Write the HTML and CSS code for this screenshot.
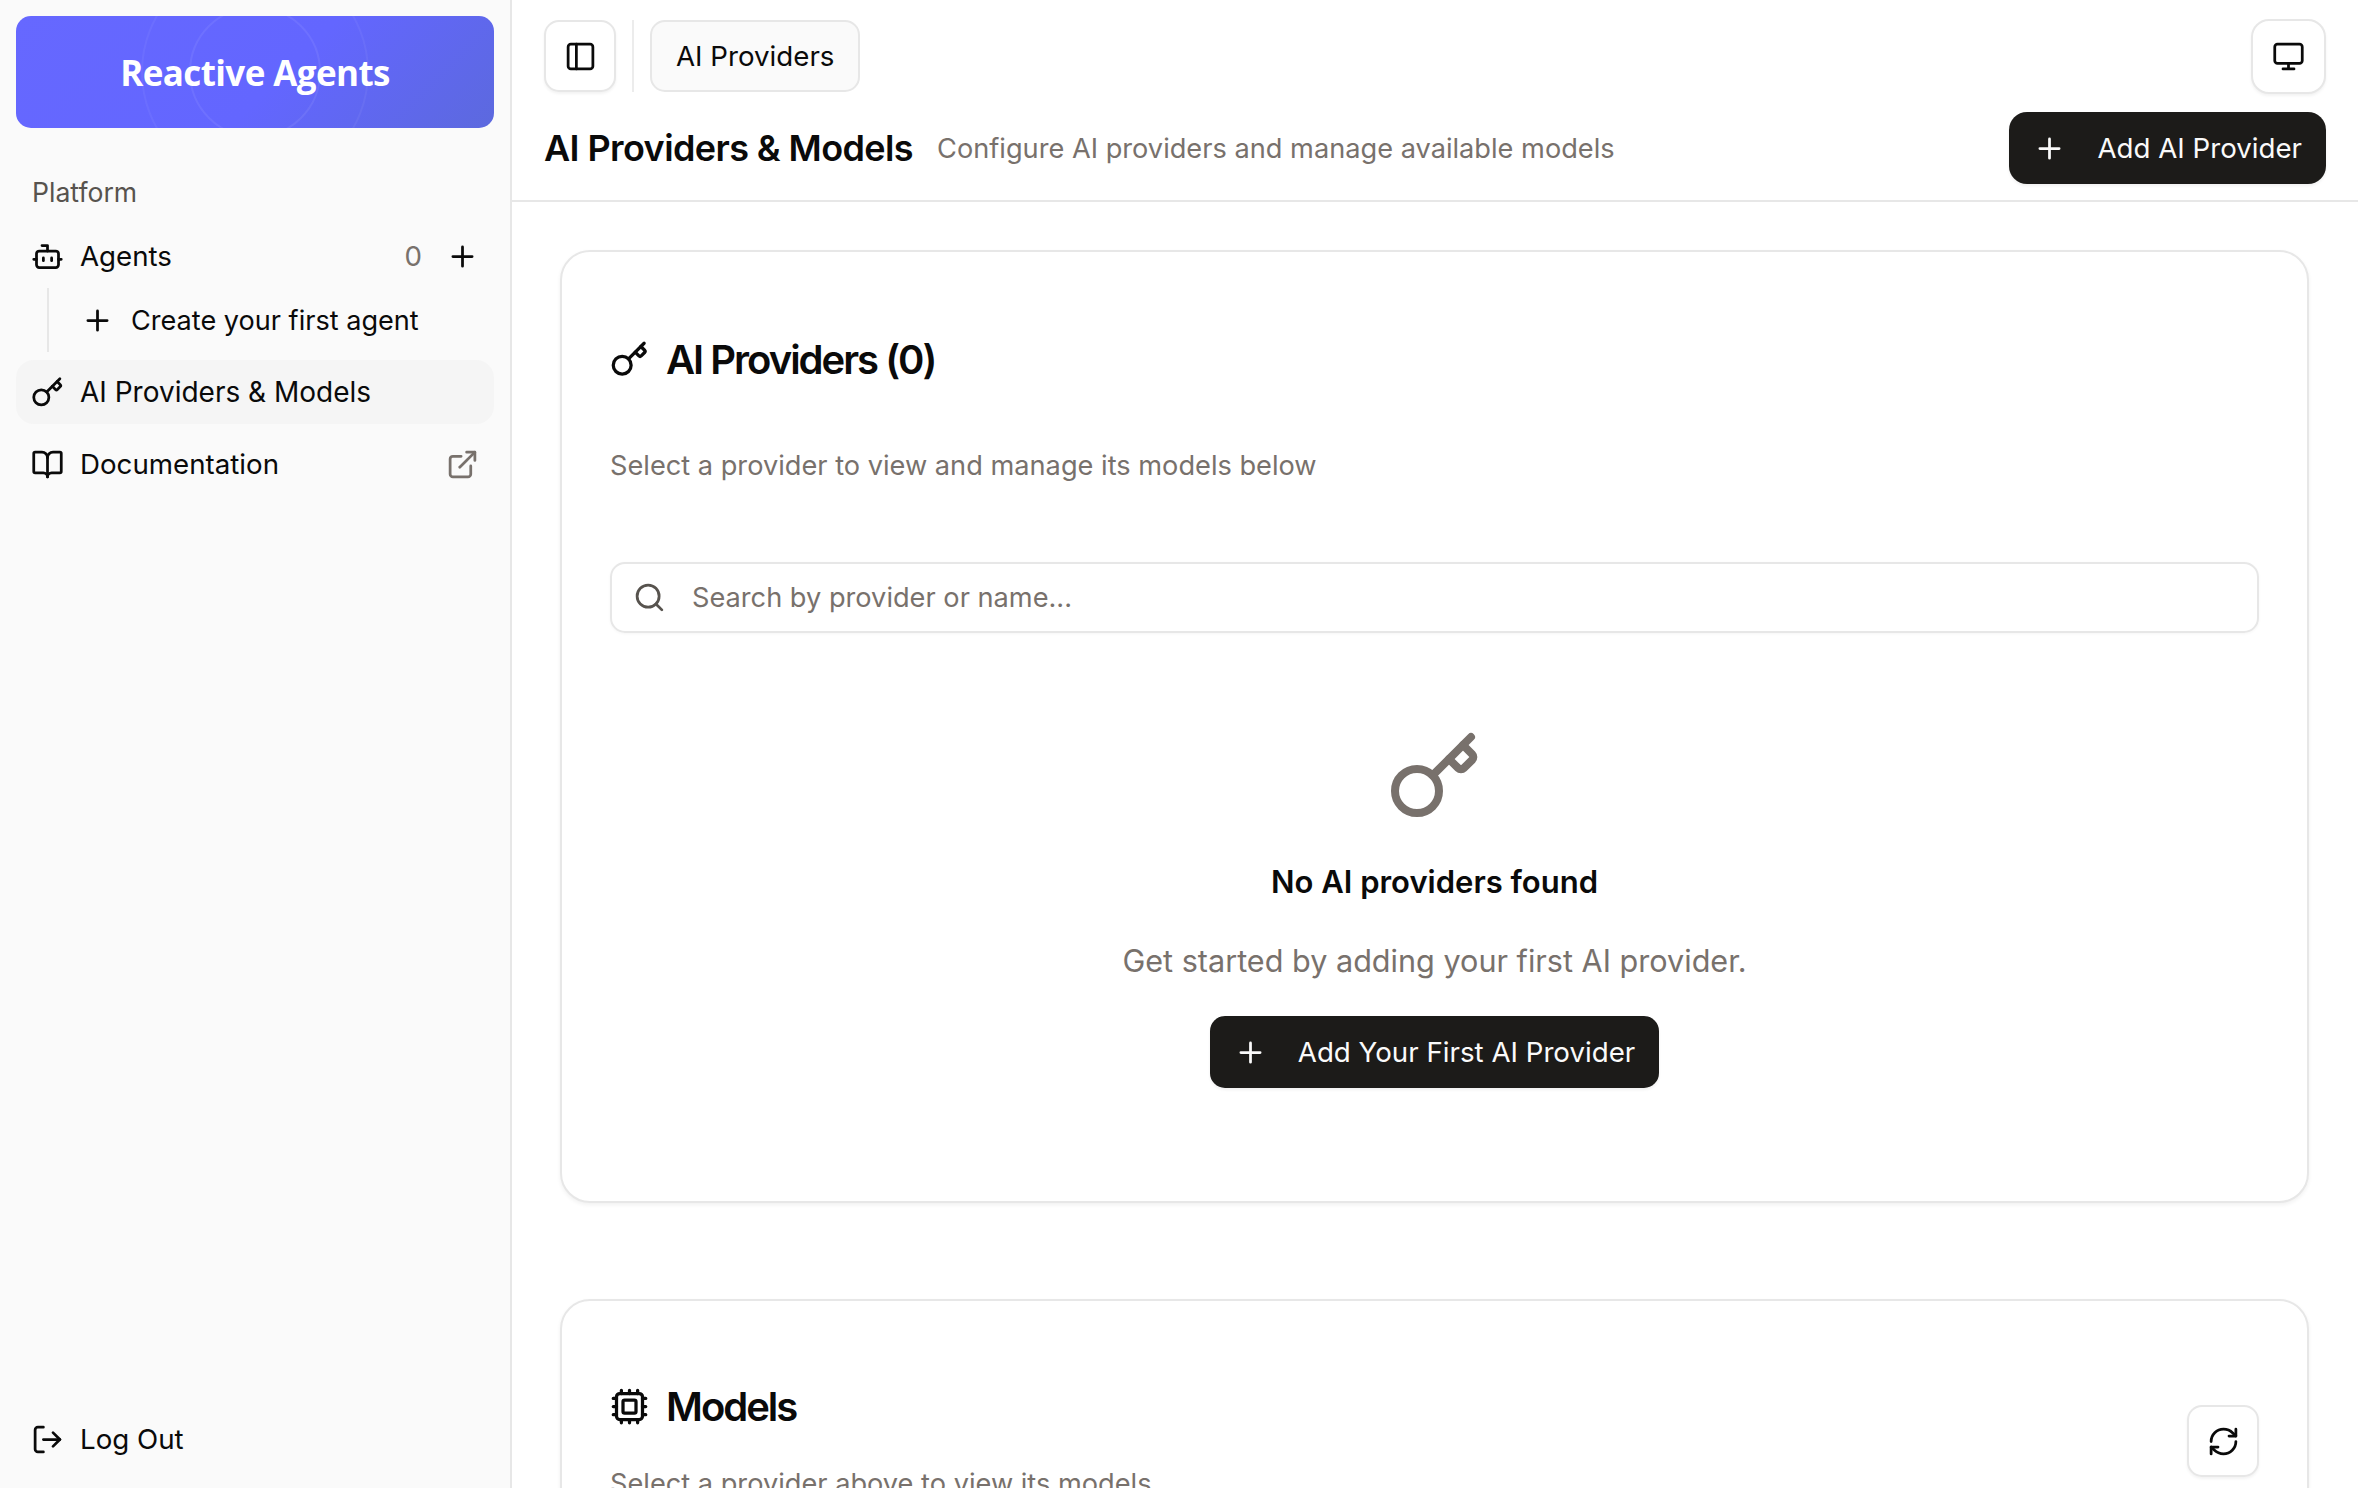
FILE: index.html
```html
<!DOCTYPE html>
<html lang="en">
<head>
<meta charset="utf-8">
<title>AI Providers &amp; Models</title>
<link rel="stylesheet" href="styles.css">
</head>
<body>
<svg class="defs" width="0" height="0" aria-hidden="true">
  <symbol id="i-bot" viewBox="0 0 24 24"><path d="M12 8V4H8"/><rect width="16" height="12" x="4" y="8" rx="2"/><path d="M2 14h2M20 14h2M15 13v2M9 13v2"/></symbol>
  <symbol id="i-key" viewBox="0 0 24 24"><path d="m15.5 7.5 2.3 2.3a1 1 0 0 0 1.4 0l2.1-2.1a1 1 0 0 0 0-1.4L19 4"/><path d="m21 2-9.6 9.6"/><circle cx="7.5" cy="15.5" r="5.5"/></symbol>
  <symbol id="i-book" viewBox="0 0 24 24"><path d="M12 7v14"/><path d="M3 18a1 1 0 0 1-1-1V4a1 1 0 0 1 1-1h5a4 4 0 0 1 4 4 4 4 0 0 1 4-4h5a1 1 0 0 1 1 1v13a1 1 0 0 1-1 1h-6a3 3 0 0 0-3 3 3 3 0 0 0-3-3z"/></symbol>
  <symbol id="i-ext" viewBox="0 0 24 24"><path d="M15 3h6v6"/><path d="M10 14 21 3"/><path d="M18 13v6a2 2 0 0 1-2 2H5a2 2 0 0 1-2-2V8a2 2 0 0 1 2-2h6"/></symbol>
  <symbol id="i-logout" viewBox="0 0 24 24"><path d="m16 17 5-5-5-5"/><path d="M21 12H9"/><path d="M9 21H5a2 2 0 0 1-2-2V5a2 2 0 0 1 2-2h4"/></symbol>
  <symbol id="i-panel" viewBox="0 0 24 24"><rect width="18" height="18" x="3" y="3" rx="2"/><path d="M9 3v18"/></symbol>
  <symbol id="i-monitor" viewBox="0 0 24 24"><rect width="20" height="14" x="2" y="3" rx="2"/><path d="M8 21h8M12 17v4"/></symbol>
  <symbol id="i-plus" viewBox="0 0 24 24"><path d="M5 12h14M12 5v14"/></symbol>
  <symbol id="i-search" viewBox="0 0 24 24"><path d="m21 21-4.34-4.34"/><circle cx="11" cy="11" r="8"/></symbol>
  <symbol id="i-cpu" viewBox="0 0 24 24"><path d="M12 20v2M12 2v2M17 20v2M17 2v2M2 12h2M2 17h2M2 7h2M20 12h2M20 17h2M20 7h2M7 20v2M7 2v2"/><rect x="4" y="4" width="16" height="16" rx="2"/><rect x="8" y="8" width="8" height="8" rx="1"/></symbol>
  <symbol id="i-refresh" viewBox="0 0 24 24"><path d="M3 12a9 9 0 0 1 9-9 9.75 9.75 0 0 1 6.74 2.74L21 8"/><path d="M21 3v5h-5"/><path d="M21 12a9 9 0 0 1-9 9 9.75 9.75 0 0 1-6.74-2.74L3 16"/><path d="M8 16H3v5"/></symbol>
</svg>

<div class="app">
  <aside class="sidebar">
    <div class="logo">
      <span class="ring ring-inner"></span>
      <span class="ring ring-outer"></span>
      <span class="logo-text">Reactive Agents</span>
    </div>
    <div class="group-label">Platform</div>
    <nav class="nav">
      <div class="nav-row">
        <svg class="icon"><use href="#i-bot"/></svg>
        <span class="nav-text">Agents</span>
        <span class="count">0</span>
        <svg class="icon"><use href="#i-plus"/></svg>
      </div>
      <div class="sub-list">
        <div class="sub-row">
          <svg class="icon"><use href="#i-plus"/></svg>
          <span>Create your first agent</span>
        </div>
      </div>
      <div class="nav-row active">
        <svg class="icon"><use href="#i-key"/></svg>
        <span class="nav-text">AI Providers &amp; Models</span>
      </div>
      <div class="nav-row">
        <svg class="icon"><use href="#i-book"/></svg>
        <span class="nav-text">Documentation</span>
        <svg class="icon muted"><use href="#i-ext"/></svg>
      </div>
    </nav>
    <div class="nav-row logout">
      <svg class="icon"><use href="#i-logout"/></svg>
      <span class="nav-text">Log Out</span>
    </div>
  </aside>

  <main class="main">
    <header class="header">
      <div class="topbar">
        <button class="icon-btn"><svg class="icon"><use href="#i-panel"/></svg></button>
        <span class="divider"></span>
        <span class="crumb">AI Providers</span>
        <button class="icon-btn push"><svg class="icon"><use href="#i-monitor"/></svg></button>
      </div>
      <div class="titlebar">
        <h1 class="page-title">AI Providers &amp; Models</h1>
        <p class="page-sub">Configure AI providers and manage available models</p>
        <button class="primary push"><svg class="icon"><use href="#i-plus"/></svg><span>Add AI Provider</span></button>
      </div>
    </header>

    <div class="content">
      <section class="card">
        <h2 class="card-title"><svg class="icon-lg"><use href="#i-key"/></svg>AI Providers (0)</h2>
        <p class="card-sub">Select a provider to view and manage its models below</p>
        <div class="search">
          <svg class="icon search-icon"><use href="#i-search"/></svg>
          <span>Search by provider or name...</span>
        </div>
        <div class="empty">
          <svg class="empty-icon"><use href="#i-key"/></svg>
          <h3 class="empty-title">No AI providers found</h3>
          <p class="empty-sub">Get started by adding your first AI provider.</p>
          <button class="primary"><svg class="icon"><use href="#i-plus"/></svg><span>Add Your First AI Provider</span></button>
        </div>
      </section>

      <section class="card models">
        <div class="models-head">
          <div>
            <h2 class="card-title"><svg class="icon-lg"><use href="#i-cpu"/></svg>Models</h2>
            <p class="card-sub models-sub">Select a provider above to view its models</p>
          </div>
          <button class="icon-btn refresh"><svg class="icon"><use href="#i-refresh"/></svg></button>
        </div>
      </section>
    </div>
  </main>
</div>
</body>
</html>
```

FILE: styles.css
```css
* { box-sizing: border-box; }
html, body { margin: 0; height: 100%; overflow: hidden; }
body { font-family: Inter, "Liberation Sans", sans-serif; font-size: 27.7px; color: #0a0a0a; background: #fff; }
h1, h2, h3, p { margin: 0; font: inherit; }
button { font: inherit; color: inherit; cursor: pointer; }
.defs { position: absolute; }

.icon, .icon-lg, .empty-icon { fill: none; stroke: currentColor; stroke-width: 2; stroke-linecap: round; stroke-linejoin: round; flex: none; }
.icon { width: 33px; height: 33px; }
.icon-lg { width: 39px; height: 39px; }
.muted { color: #78716c; }

.app { display: flex; height: 1488px; }

.sidebar { width: 512px; flex: none; background: #fafafa; border-right: 2px solid #e7e7e7; padding: 16px 16px 16px; display: flex; flex-direction: column; }
.logo { position: relative; overflow: hidden; height: 112px; border-radius: 15px; background: linear-gradient(135deg, #6668ff 0%, #6366ff 55%, #5c69de 100%); display: flex; align-items: center; justify-content: center; }
.ring { position: absolute; left: 239px; top: 56px; border-radius: 50%; border: 2px solid rgba(255,255,255,.07); transform: translate(-50%, -50%); }
.ring-inner { width: 132px; height: 132px; }
.ring-outer { width: 228px; height: 228px; border-color: rgba(255,255,255,.05); }
.logo-text { position: relative; font-family: "Open Sans", sans-serif; font-weight: 700; font-size: 35px; color: #fff; letter-spacing: -0.6px; }

.group-label { margin: 46px 0 0 16px; height: 36px; line-height: 36px; font-size: 26.6px; color: #57534e; }
.nav { margin-top: 14px; }
.nav-row { display: flex; align-items: center; gap: 16px; height: 64px; padding: 0 15px; border-radius: 18px; }
.nav-text { flex: 1; }
.nav-row.active { background: #f5f5f5; margin-top: 8px; margin-bottom: 8px; font-size: 28px; }
.count { color: #78716c; margin-right: 8px; }
.sub-list { margin-left: 31px; border-left: 2px solid #e7e7e7; height: 64px; padding-left: 32px; }
.sub-row { display: flex; align-items: center; gap: 17px; height: 64px; font-size: 27.1px; }
.logout { margin-top: auto; margin-bottom: 1px; }

.main { flex: 1; min-width: 0; display: flex; flex-direction: column; }
.header { height: 202px; border-bottom: 2px solid #e7e7e7; padding: 19px 32px 0; flex: none; }
.topbar { display: flex; align-items: center; height: 74px; }
.icon-btn { width: 72px; height: 72px; display: flex; align-items: center; justify-content: center; padding: 0; background: #fff; border: 2px solid #e7e7e7; border-radius: 15px; box-shadow: 0 2px 3px rgba(0,0,0,.05); }
.divider { width: 2px; height: 72px; background: #ececec; margin: 0 16px; }
.crumb { height: 72px; padding: 0 24px; display: flex; align-items: center; background: #fafafa; border: 2px solid #e7e7e7; border-radius: 15px; }
.push { margin-left: auto; }
.topbar .push { width: 75px; height: 75px; border-radius: 18px; }
.titlebar { display: flex; align-items: center; margin-top: 18px; height: 74px; }
.page-title { font-size: 36px; font-weight: 600; letter-spacing: -0.6px; }
.page-sub { margin-left: 24px; color: #78716c; font-size: 27.2px; }
.primary { display: inline-flex; align-items: center; gap: 31px; height: 72px; padding: 0 24px; background: #1c1b19; color: #fafafa; border: 0; border-radius: 15px; box-shadow: 0 2px 3px rgba(0,0,0,.06); }
.titlebar .primary { border-radius: 18px; }

.content { padding: 48px 49px 0 48px; }
.card { height: 953px; border: 2px solid #e7e7e7; border-radius: 30px; padding: 0 48px; background: #fff; box-shadow: 0 2px 4px rgba(0,0,0,.06); }
.card-title { display: flex; align-items: center; gap: 17px; font-size: 40px; font-weight: 600; letter-spacing: -2px; margin-top: 80px; height: 54px; }
.card-sub { margin-top: 62px; height: 36px; line-height: 36px; color: #78716c; font-size: 27.2px; }
.search { margin-top: 78px; height: 71px; display: flex; align-items: center; gap: 26px; padding-left: 21px; border: 2px solid #e7e7e7; border-radius: 15px; color: #78716c; font-size: 27.2px; box-shadow: 0 1px 3px rgba(0,0,0,.04); }
.search-icon { color: #57534e; }
.empty { display: flex; flex-direction: column; align-items: center; }
.empty-icon { width: 96px; height: 96px; stroke-width: 2; color: #78716c; margin-top: 96px; }
.empty-title { font-size: 31px; font-weight: 600; margin-top: 36px; height: 42px; line-height: 42px; }
.empty-sub { font-size: 30.6px; color: #78716c; margin-top: 37px; height: 42px; line-height: 42px; }
.empty .primary { margin-top: 34px; }

.models { margin-top: 96px; }
.models-head { display: flex; justify-content: space-between; }
.models .card-title { margin-top: 78px; }
.models-sub { margin-top: 33px; }
.refresh { margin-top: 104px; }
```
